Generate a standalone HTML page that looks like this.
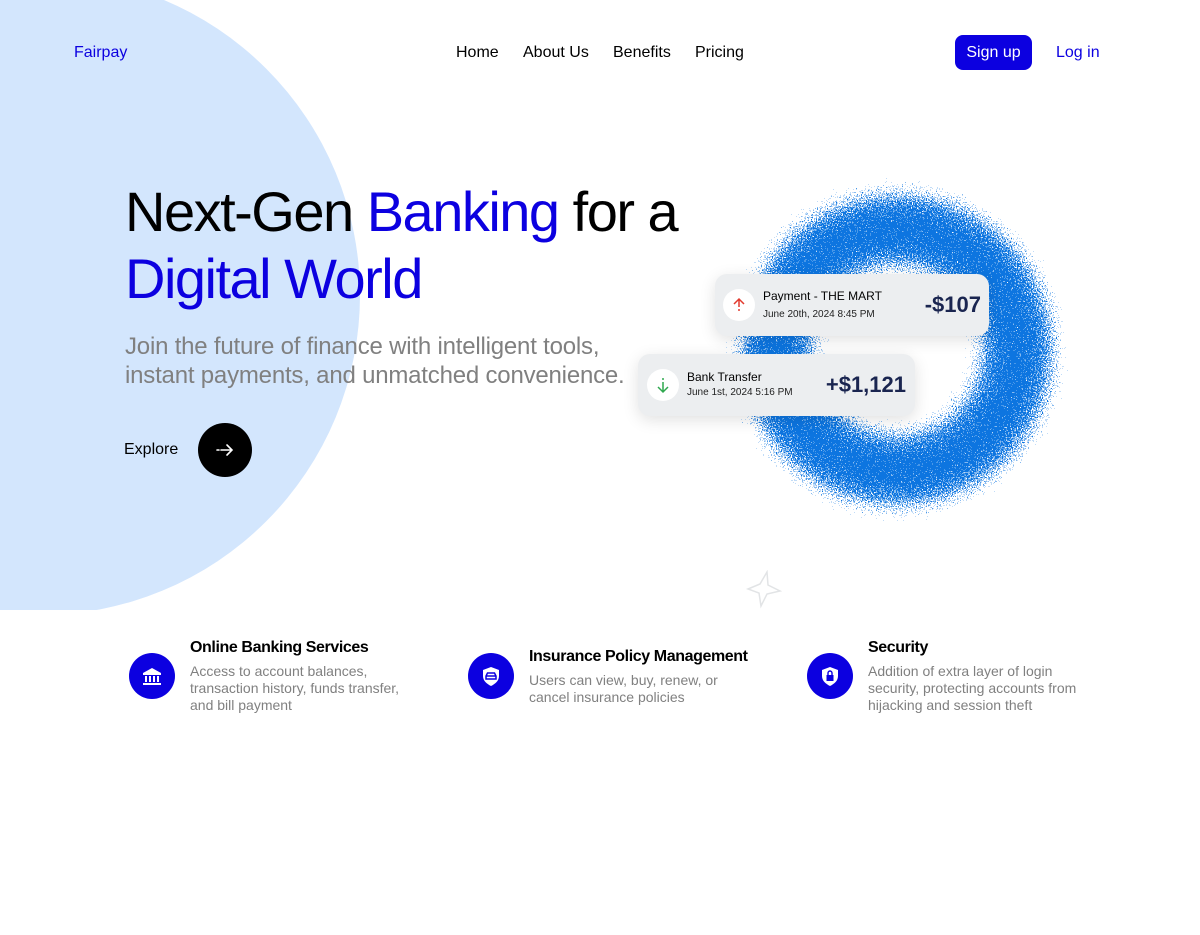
<!DOCTYPE html>
<html><head><meta charset="utf-8"><style>
*{margin:0;padding:0;box-sizing:border-box}
body{width:1200px;height:935px;background:#fff;font-family:"Liberation Sans",sans-serif;position:relative;overflow:hidden;color:#000}
.blob{position:absolute;left:0;top:0;width:1200px;height:610px;overflow:hidden}
.blob div{position:absolute;left:-280px;top:-25px;width:640px;height:640px;border-radius:50%;background:#d3e6fd}
.abs{position:absolute;white-space:nowrap}
.nav{font-size:16px;top:44px}
h1{position:absolute;left:125px;top:178px;font-size:56px;font-weight:normal;line-height:67px;letter-spacing:-1.5px}
.b{color:#0c00e0}
.sub{left:125px;top:332px;font-size:24px;line-height:29px;color:#808080;letter-spacing:-0.2px}
.card{position:absolute;background:#eceef0;border-radius:12px;box-shadow:0 4px 16px rgba(0,0,0,.12)}
.ic{position:absolute;width:32px;height:32px;border-radius:50%;background:#fff}
.feat{position:absolute}
.circ{position:absolute;width:46px;height:46px;border-radius:50%;background:#0c00e0}
.ft{font-size:16px;font-weight:bold;letter-spacing:-0.4px}
.fd{font-size:14px;color:#808080;line-height:17px;margin-top:6px}
</style></head><body>
<div class="blob"><div></div></div>
<div class="abs" style="left:74px;top:44px;font-size:16px;color:#0c00e0">Fairpay</div>
<div class="abs nav" style="left:456px">Home</div>
<div class="abs nav" style="left:523px">About Us</div>
<div class="abs nav" style="left:613px">Benefits</div>
<div class="abs nav" style="left:695px">Pricing</div>
<div class="abs" style="left:955px;top:35px;width:77px;height:35px;border-radius:8px;background:#0c00e0;color:#fff;font-size:16px;text-align:center;line-height:35px">Sign up</div>
<div class="abs nav" style="left:1056px;color:#0c00e0">Log in</div>

<h1>Next-Gen <span class="b">Banking</span> for a<br><span class="b">Digital World</span></h1>
<div class="abs sub">Join the future of finance with intelligent tools,<br>instant payments, and unmatched convenience.</div>
<div class="abs" style="left:124px;top:441px;font-size:16px">Explore</div>
<div class="abs" style="left:198px;top:423px;width:54px;height:54px;border-radius:50%;background:#000">
<svg width="54" height="54" viewBox="0 0 54 54"><path d="M19 27h2M23 27h11M29 22l5 5-5 5" stroke="#fff" stroke-width="1.6" fill="none" stroke-linecap="round"/></svg></div>

<svg class="abs" style="left:700px;top:150px" width="400" height="400" viewBox="0 0 400 400">
<defs>
<filter id="g" x="0" y="0" width="400" height="400" filterUnits="userSpaceOnUse">
<feGaussianBlur in="SourceGraphic" stdDeviation="22" result="bl"/>
<feTurbulence type="fractalNoise" baseFrequency="0.8" numOctaves="2" seed="3" result="n"/>
<feColorMatrix in="n" type="matrix" values="0 0 0 0 0  0 0 0 0 0  0 0 0 0 0  1 0 0 0 0" result="na"/>
<feComposite in="bl" in2="na" operator="arithmetic" k1="0" k2="1.3" k3="1.4" k4="-1.18" result="c"/>
<feComponentTransfer in="c" result="t"><feFuncA type="discrete" tableValues="0 0 0 1 1 1"/></feComponentTransfer>
<feFlood flood-color="#0a74e0"/>
<feComposite in2="t" operator="in"/>
</filter>
</defs>
<circle cx="197" cy="200" r="122" fill="none" stroke="#000" stroke-width="92" filter="url(#g)"/>
</svg>

<div class="card" style="left:715px;top:274px;width:274px;height:62px">
<div class="ic" style="left:8px;top:15px"><svg width="32" height="32"><path d="M16 10v8M16 20v2M11 15l5-5 5 5" stroke="#e23a2e" stroke-width="1.5" fill="none"/></svg></div>
<div class="abs" style="left:48px;top:15px;font-size:12px">Payment - THE MART</div>
<div class="abs" style="left:48px;top:35px;font-size:10px;color:#222">June 20th, 2024 8:45 PM</div>
<div class="abs" style="right:8px;top:18px;font-size:22px;font-weight:bold;color:#1a2550">-$107</div>
</div>
<div class="card" style="left:638px;top:354px;width:277px;height:62px">
<div class="ic" style="left:9px;top:15px"><svg width="32" height="32"><path d="M16 9v2M16 13v10M11 18l5 5 5-5" stroke="#2fa84f" stroke-width="1.5" fill="none"/></svg></div>
<div class="abs" style="left:49px;top:16px;font-size:12px">Bank Transfer</div>
<div class="abs" style="left:49px;top:33px;font-size:10px;color:#222">June 1st, 2024 5:16 PM</div>
<div class="abs" style="right:9px;top:18px;font-size:22px;font-weight:bold;color:#1a2550">+$1,121</div>
</div>

<svg class="abs" style="left:745px;top:570px" width="40" height="40"><path d="M22 2l1 13 12 6-13 3-6 12-2-13-11-4 12-5z" stroke="#e2e4e6" stroke-width="1.5" fill="none"/></svg>

<div class="circ" style="left:129px;top:653px"><svg width="46" height="46"><path d="M23 15l-9 5v2h18v-2z M16 23h2v6h-2z M20 23h2v6h-2zM24 23h2v6h-2zM28 23h2v6h-2zM14 30h18v2H14z" fill="#fff"/></svg></div>
<div class="feat" style="left:190px;top:639px"><div class="ft">Online Banking Services</div><div class="fd">Access to account balances,<br>transaction history, funds transfer,<br>and bill payment</div></div>

<div class="circ" style="left:468px;top:653px"><svg width="46" height="46"><path d="M23 14l8 3v6c0 5-4 8-8 10-4-2-8-5-8-10v-6z" fill="#fff"/><path d="M18 26v-3l1.5-3h7l1.5 3v3zM17.5 23h11" stroke="#0c00e0" stroke-width="1.5" fill="none"/></svg></div>
<div class="feat" style="left:529px;top:648px"><div class="ft">Insurance Policy Management</div><div class="fd">Users can view, buy, renew, or<br>cancel insurance policies</div></div>

<div class="circ" style="left:807px;top:653px"><svg width="46" height="46"><path d="M23 14l8 3v6c0 5-4 8-8 10-4-2-8-5-8-10v-6z" fill="#fff"/><rect x="19.5" y="22" width="7" height="6" fill="#0c00e0"/><path d="M21 22v-2a2 2 0 0 1 4 0v2" stroke="#0c00e0" stroke-width="1.4" fill="none"/></svg></div>
<div class="feat" style="left:868px;top:639px"><div class="ft">Security</div><div class="fd">Addition of extra layer of login<br>security, protecting accounts from<br>hijacking and session theft</div></div>
</body></html>
